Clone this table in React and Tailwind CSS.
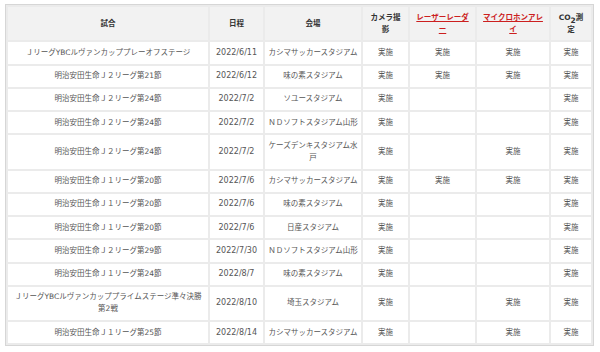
import React from "react";

const Y = "実施";
const rows = [
  [["ＪリーグYBCルヴァンカッププレーオフステージ"], "2022/6/11", ["カシマサッカースタジアム"], Y, Y, Y, Y],
  [["明治安田生命Ｊ２リーグ第21節"], "2022/6/12", ["味の素スタジアム"], Y, Y, Y, Y],
  [["明治安田生命Ｊ２リーグ第24節"], "2022/7/2", ["ソユースタジアム"], Y, "", "", Y],
  [["明治安田生命Ｊ２リーグ第24節"], "2022/7/2", ["ＮＤソフトスタジアム山形"], Y, "", "", Y],
  [["明治安田生命Ｊ２リーグ第24節"], "2022/7/2", ["ケーズデンキスタジアム水", "戸"], Y, "", Y, Y],
  [["明治安田生命Ｊ１リーグ第20節"], "2022/7/6", ["カシマサッカースタジアム"], Y, Y, Y, Y],
  [["明治安田生命Ｊ１リーグ第20節"], "2022/7/6", ["味の素スタジアム"], Y, "", "", Y],
  [["明治安田生命Ｊ１リーグ第20節"], "2022/7/6", ["日産スタジアム"], Y, "", "", Y],
  [["明治安田生命Ｊ２リーグ第29節"], "2022/7/30", ["ＮＤソフトスタジアム山形"], Y, "", "", Y],
  [["明治安田生命Ｊ１リーグ第24節"], "2022/8/7", ["味の素スタジアム"], Y, "", "", Y],
  [["ＪリーグYBCルヴァンカッププライムステージ準々決勝", "第2戦"], "2022/8/10", ["埼玉スタジアム"], Y, "", Y, Y],
  [["明治安田生命Ｊ１リーグ第25節"], "2022/8/14", ["カシマサッカースタジアム"], Y, "", Y, Y],
];

function Lines({ lines }) {
  return lines.map((l, i) => (
    <React.Fragment key={i}>
      {i > 0 && <br />}
      {l}
    </React.Fragment>
  ));
}

export default function App() {
  const th = "bg-[#f2f2f2] px-[2px] py-[4.625px] leading-[12px] font-bold text-[#333] text-center align-middle whitespace-nowrap";
  const td = "bg-white px-[2px] py-[4.625px] leading-[12px] text-center align-middle whitespace-nowrap";
  return (
    <div className="w-[600px] h-[352px] bg-white pt-[4px] pl-[5px] font-['DejaVu_Sans','Noto_Sans_CJK_JP',sans-serif] text-[7.5px] text-[#555]">
      <div className="w-[589px] border border-[#d6d6d6]">
        <table className="table-fixed w-[587px] border-separate border-spacing-[2px] bg-[#ebebeb]">
          <colgroup>
            <col className="w-[200px]" />
            <col className="w-[53px]" />
            <col className="w-[96px]" />
            <col className="w-[45px]" />
            <col className="w-[65px]" />
            <col className="w-[72px]" />
            <col className="w-[40px]" />
          </colgroup>
          <thead>
            <tr>
              <th className={th}>試合</th>
              <th className={th}>日程</th>
              <th className={th}>会場</th>
              <th className={th}>カメラ撮<br />影</th>
              <th className={th}>
                <span className="text-[#cc1f1f] underline">レーザーレーダ<br />ー</span>
              </th>
              <th className={th}>
                <span className="text-[#cc1f1f] underline">マイクロホンアレ<br />イ</span>
              </th>
              <th className={th}>
                CO<span className="relative top-[3px]">2</span>測<br />定
              </th>
            </tr>
          </thead>
          <tbody>
            {rows.map((r, i) => (
              <tr key={i}>
                <td className={td}><Lines lines={r[0]} /></td>
                <td className={td + " text-[8px]"}>{r[1]}</td>
                <td className={td}><Lines lines={r[2]} /></td>
                <td className={td}>{r[3]}</td>
                <td className={td}>{r[4]}</td>
                <td className={td}>{r[5]}</td>
                <td className={td}>{r[6]}</td>
              </tr>
            ))}
          </tbody>
        </table>
      </div>
    </div>
  );
}
